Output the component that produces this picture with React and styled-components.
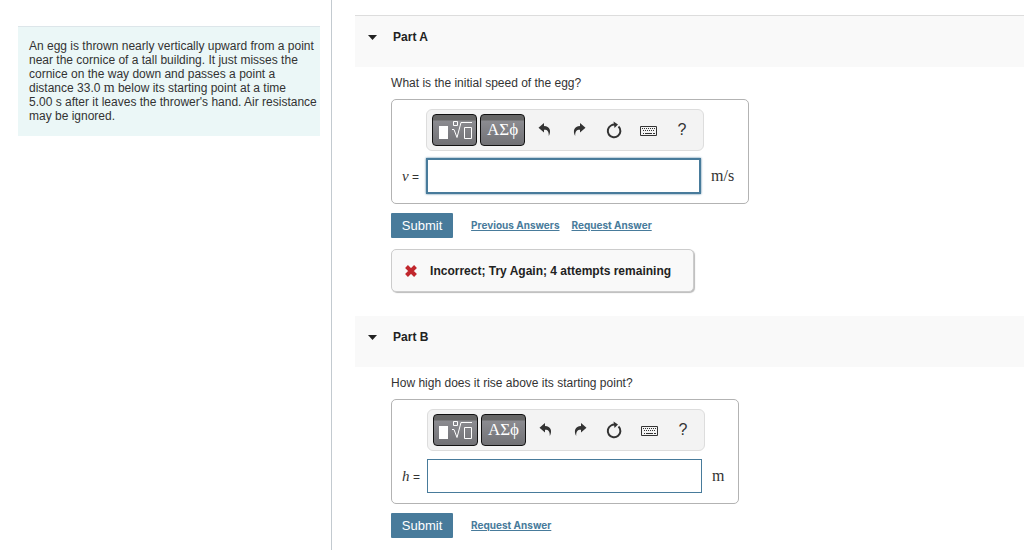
import React from 'react';
import styled, { createGlobalStyle } from 'styled-components';

const GlobalStyle = createGlobalStyle`
  * {
    box-sizing: border-box;
  }
  body {
    margin: 0;
    background: #fff;
    color: #333;
    font-family: "Liberation Sans", Arial, sans-serif;
    font-size: 12px;
    line-height: 14px;
  }
  button, input {
    font-family: inherit;
  }
`;

const Page = styled.div`
  display: grid;
  grid-template-columns: minmax(0, 12fr) minmax(0, 25fr);
  min-height: 100vh;
`;

const Sidebar = styled.aside`
  padding: 26px 11px 0 18px;
  border-right: 1px solid #c3cad0;
`;

const Problem = styled.p`
  margin: 0;
  padding: 12px 1px 13px 11px;
  background: #ebf7f7;
  border-top: 1px solid #dde6ea;
`;

const Unit = styled.span`
  font-family: "Liberation Serif", serif;
  font-size: ${({ $big }) => ($big ? 16 : 14)}px;
  line-height: 12px;
`;

const Main = styled.main`
  padding: 15px 0 0 23px;
`;

const Part = styled.section`
  margin-bottom: 24px;
`;

const PartHeader = styled.h2`
  display: flex;
  margin: 0;
  height: ${({ $first }) => ($first ? 52 : 51)}px;
  padding: 13px;
  background: #f9f9f9;
  border-top: ${({ $first }) => ($first ? '1px solid #ddd' : '0')};
`;

const PartToggle = styled.button`
  display: flex;
  align-items: center;
  gap: 16px;
  height: 16px;
  padding: 0;
  border: 0;
  background: none;
  color: #222;
  font-size: 12px;
  font-weight: bold;
`;

const PartBody = styled.div`
  padding: 9px 0 0 36px;
`;

const Question = styled.p`
  margin: 0 0 9px;
`;

const AnswerBox = styled.div`
  display: inline-grid;
  grid-template-columns: auto 275px auto;
  row-gap: 7px;
  align-items: center;
  padding: 9px 14px 9px 10px;
  border: 1px solid #b3b3b3;
  border-radius: 5px;
  vertical-align: top;
`;

const Toolbar = styled.div`
  grid-column: 2;
  display: flex;
  align-items: center;
  height: 42px;
  margin-right: -3px;
  padding: 0 4px 0 5px;
  background: #f3f3f3;
  border: 1px solid #ddd;
  border-radius: 6px;
`;

const PaletteButton = styled.button`
  display: flex;
  align-items: center;
  justify-content: center;
  width: 45px;
  height: 32px;
  margin-right: 3px;
  padding: 0;
  border: 1px solid #111;
  border-radius: 4px;
  background: linear-gradient(#666 0, #666 5px, #8b8b90 6px, #717175 100%);
  color: #fff;
  font-family: "Liberation Serif", serif;
  font-size: 17px;
`;

const ToolButton = styled.button`
  display: flex;
  flex: 1;
  align-items: center;
  justify-content: center;
  height: 30px;
  padding: 0;
  border: 0;
  background: none;
  color: #333;
  font-size: 16px;
`;

const Variable = styled.label`
  grid-column: 1;
  padding-right: 7px;

  i {
    font-family: "Liberation Serif", serif;
    font-size: 15px;
  }
`;

const AnswerInput = styled.input`
  width: 100%;
  height: ${({ $active }) => ($active ? 36 : 34)}px;
  margin: ${({ $active }) => ($active ? 0 : '1px 0')};
  padding: 0 6px;
  border: ${({ $active }) => ($active ? 2 : 1)}px solid #487b9b;
  box-shadow: ${({ $active }) => ($active ? '0 0 2px #487b9b' : 'none')};
  font-size: 14px;
  outline: 0;
`;

const UnitCell = styled.span`
  padding: 2px 0 0 10px;
`;

const Actions = styled.div`
  display: flex;
  align-items: center;
  margin-top: 9px;
`;

const Submit = styled.button`
  width: 62px;
  height: 25px;
  margin-right: 18px;
  padding: 0;
  border: 0;
  border-radius: 1px;
  background: #487b9b;
  color: #fff;
  font-size: 13px;
`;

const ActionLink = styled.a`
  margin-right: 12px;
  padding-bottom: 2px;
  color: #487b9b;
  font-family: Inter, sans-serif;
  font-size: 10px;
  font-weight: bold;
  line-height: 12px;
`;

const Feedback = styled.div`
  display: inline-flex;
  align-items: center;
  gap: 12px;
  height: 43px;
  margin-top: 11px;
  padding: 0 22px 0 12px;
  background: #f9f9f9;
  border: 1px solid #ccc;
  border-radius: 5px;
  box-shadow: 1px 1px 1px #bbb;
  color: #222;
  font-size: 12px;
  font-weight: bold;
  vertical-align: top;
`;

const Caret = () => (
  <svg width="9" height="5" viewBox="0 0 9 5" aria-hidden="true">
    <path d="M0 0h9L4.5 5z" fill="#222" />
  </svg>
);

const TemplateIcon = () => (
  <svg width="36" height="22" viewBox="0 0 36 22" fill="none" stroke="#fff" aria-hidden="true">
    <path d="M2 7h9v13H2z" fill="#fff" stroke="none" />
    <path d="M16.500 2.500h4v4h-4zM27.500 8.500h7v11h-7z" />
    <path d="M15 10.500h2l3 8 4-15h11" />
  </svg>
);

const ArrowIcon = ({ flip }) => (
  <svg width="14" height="14" viewBox="0 0 14 14" aria-hidden="true">
    <path
      d="M6 0L0.500 4.800 6 9.500V6.800C9.300 6.600 11 8.500 10.800 13C13.500 8.500 12 3 6 3z"
      fill="#333"
      transform={flip ? 'translate(14 0) scale(-1 1)' : undefined}
    />
  </svg>
);

const ResetIcon = () => (
  <svg width="16" height="18" viewBox="0 0 16 18" fill="none" aria-hidden="true">
    <path d="M12.500 5.500A6.300 6.300 0 1 1 5 4.500Q6.500 3.600 8.500 3.600" stroke="#333" strokeWidth="2" />
    <path d="M7.500 0.500l4.500 3-3.500 3.500z" fill="#333" />
  </svg>
);

const KeyboardIcon = () => (
  <svg width="18" height="14" viewBox="0 0 18 14" fill="none" stroke="#333" aria-hidden="true">
    <path d="M1.500 3.500h16v9h-16z" />
    <path d="M3 5.500h13M4 7.500h12" strokeDasharray="1 1" />
    <path d="M4 10.500h1M6 10.500h7M14 10.500h2" />
  </svg>
);

const XIcon = () => (
  <svg width="14" height="14" viewBox="0 0 14 14" aria-hidden="true">
    <path d="M2.500 2.500l9 9M11.500 2.500l-9 9" stroke="#c1272d" strokeWidth="4" />
  </svg>
);

const Answer = ({ id, variable, unit, active }) => (
  <AnswerBox>
    <Toolbar>
      <PaletteButton type="button" aria-label="Templates"><TemplateIcon /></PaletteButton>
      <PaletteButton type="button">ΑΣϕ</PaletteButton>
      <ToolButton type="button" aria-label="Undo"><ArrowIcon /></ToolButton>
      <ToolButton type="button" aria-label="Redo"><ArrowIcon flip /></ToolButton>
      <ToolButton type="button" aria-label="Reset"><ResetIcon /></ToolButton>
      <ToolButton type="button" aria-label="Keyboard shortcuts"><KeyboardIcon /></ToolButton>
      <ToolButton type="button">?</ToolButton>
    </Toolbar>
    <Variable htmlFor={id}><i>{variable}</i> =</Variable>
    <AnswerInput id={id} type="text" $active={active} />
    <UnitCell><Unit $big>{unit}</Unit></UnitCell>
  </AnswerBox>
);

export default function App() {
  return (
    <>
      <GlobalStyle />
      <Page>
        <Sidebar>
          <Problem>
            An egg is thrown nearly vertically upward from a point near the cornice of a tall
            building. It just misses the cornice on the way down and passes a point a
            distance 33.0 <Unit>m</Unit> below its starting point at a time 5.00&nbsp;s after it
            leaves the thrower's hand. Air resistance may be ignored.
          </Problem>
        </Sidebar>
        <Main>
          <Part>
            <PartHeader $first>
              <PartToggle type="button"><Caret />Part A</PartToggle>
            </PartHeader>
            <PartBody>
              <Question>What is the initial speed of the egg?</Question>
              <Answer id="speed" variable="v" unit="m/s" active />
              <Actions>
                <Submit type="button">Submit</Submit>
                <ActionLink href="#previous">Previous Answers</ActionLink>
                <ActionLink href="#answer-a">Request Answer</ActionLink>
              </Actions>
              <Feedback><XIcon />Incorrect; Try Again; 4 attempts remaining</Feedback>
            </PartBody>
          </Part>
          <Part>
            <PartHeader>
              <PartToggle type="button"><Caret />Part B</PartToggle>
            </PartHeader>
            <PartBody>
              <Question>How high does it rise above its starting point?</Question>
              <Answer id="height" variable="h" unit="m" />
              <Actions>
                <Submit type="button">Submit</Submit>
                <ActionLink href="#answer-b">Request Answer</ActionLink>
              </Actions>
            </PartBody>
          </Part>
        </Main>
      </Page>
    </>
  );
}
